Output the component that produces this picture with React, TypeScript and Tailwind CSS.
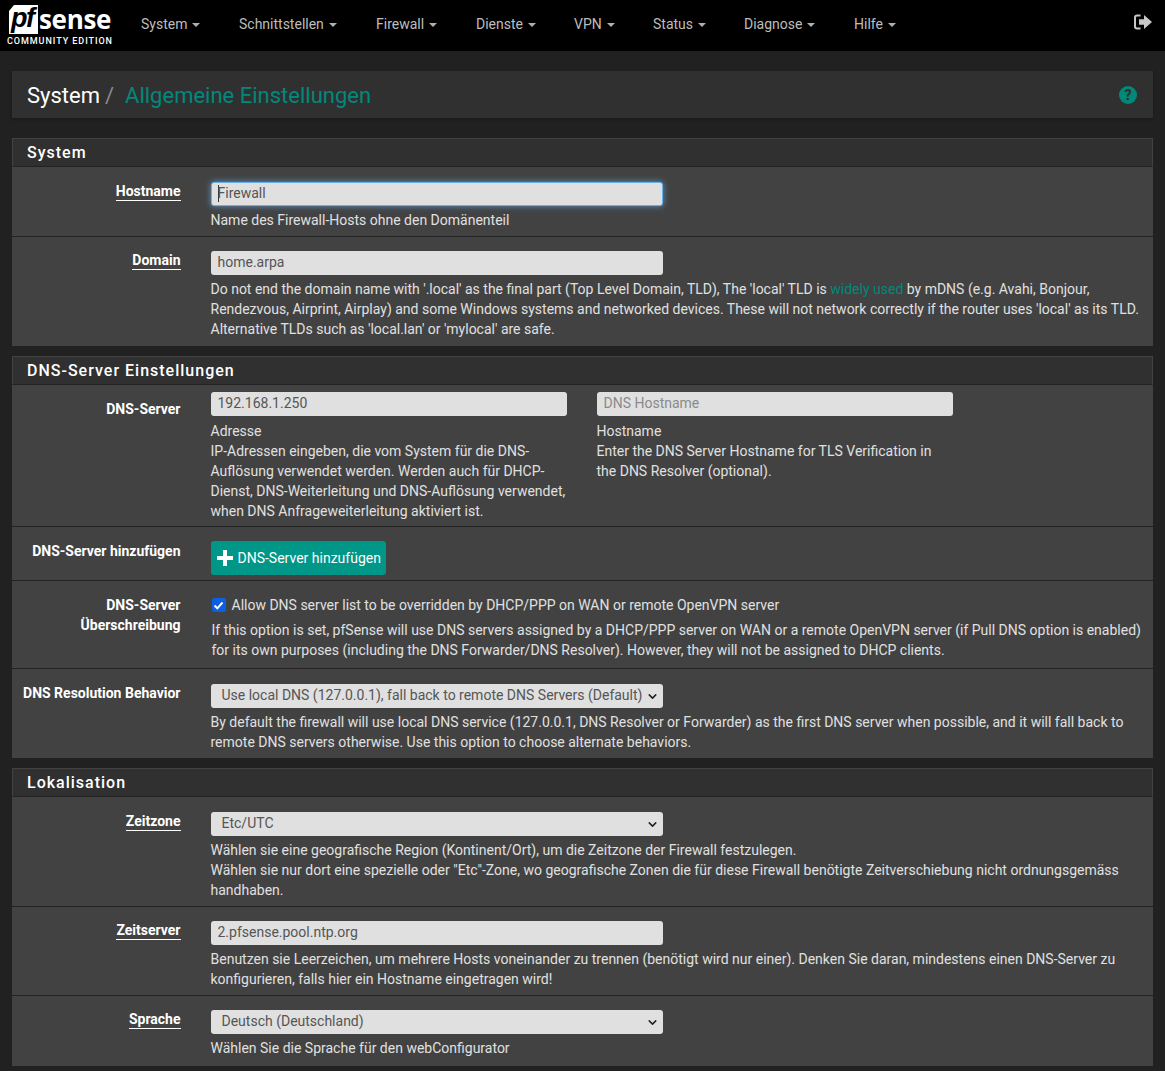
import React from "react";
import { ChevronDown } from "lucide-react";

const font = { fontFamily: "Roboto, sans-serif" };

function Caret() {
  return <span className="inline-block ml-[5px] align-middle w-0 h-0 border-x-4 border-x-transparent border-t-4 border-t-[#b0b0b0]" />;
}

const nav: [string, string][] = [
  ["System", "w-[98px]"],
  ["Schnittstellen", "w-[137px]"],
  ["Firewall", "w-[100px]"],
  ["Dienste", "w-[98px]"],
  ["VPN", "w-[79px]"],
  ["Status", "w-[91px]"],
  ["Diagnose", "w-[110px]"],
  ["Hilfe", "w-[80px]"],
];

function Logo() {
  return (
    <div className="w-[125px] h-[51px] relative shrink-0">
      <svg className="absolute left-[9px] top-[5px]" width="29" height="29" viewBox="0 0 29 29">
        <path d="M5 0H29V29H0V6Z" fill="#fff" />
      </svg>
      <span className="absolute left-[11px] top-[4px] text-[27px] leading-[28px] font-bold italic text-black tracking-[-1.5px]" style={{ fontFamily: '"Liberation Sans", sans-serif' }}>pf</span>
      <span className="absolute left-[39px] top-[6px] text-[26px] leading-[27px] font-bold text-white tracking-[-0.3px]" style={{ fontFamily: '"Open Sans", sans-serif' }}>sense</span>
      <span className="absolute left-[7px] top-[35px] text-[9px] leading-3 font-medium text-white tracking-[0.95px] whitespace-nowrap">COMMUNITY EDITION</span>
    </div>
  );
}

function Input({ value, placeholder, focus, className = "w-[452px]" }: { value?: string; placeholder?: string; focus?: boolean; className?: string }) {
  return (
    <div className={`${className} h-6 rounded-[3px] bg-[#e0e0e0] pb-[2px] flex items-center text-sm ${value ? "text-[#555]" : "text-[#8a8a8a]"} ${focus ? "border border-[#66afe9] shadow-[0_0_6px_rgba(102,175,233,0.8)] px-[6px]" : "px-[7px]"}`}>
      {focus && <span className="w-px h-[17px] bg-[#333] -mr-px" />}
      {value || placeholder}
    </div>
  );
}

function Select({ value }: { value: string }) {
  return (
    <div className="w-[452px] h-6 rounded-[3px] bg-[#e0e0e0] pl-[11px] pr-[4px] pb-[2px] flex items-center justify-between text-sm text-[#555]">
      <span>{value}</span>
      <ChevronDown size={13} strokeWidth={2.8} className="text-[#222] mt-[2px]" />
    </div>
  );
}

function Row({ label, link, h, lt = "pt-[13px]", ct = "pt-[14px]", children }: { label: React.ReactNode; link?: boolean; h: string; lt?: string; ct?: string; children: React.ReactNode }) {
  return (
    <div className={`flex gap-[30px] border-b border-[#222] last:border-b-0 ${h}`}>
      <div className={`w-[168.5px] shrink-0 text-right text-sm font-bold leading-5 text-white ${lt}`}>
        {link ? <span className="border-b border-white inline-block leading-[17px]">{label}</span> : label}
      </div>
      <div className={`flex-1 pr-[8px] min-w-0 ${ct}`}>{children}</div>
    </div>
  );
}

function Help({ children, className = "mt-[4px]" }: { children: React.ReactNode; className?: string }) {
  return <div className={`${className} text-sm leading-5 text-[#e0e0e0]`}>{children}</div>;
}

function Panel({ title, children }: { title: string; children: React.ReactNode }) {
  return (
    <section className="mb-[10px] bg-[#424242]">
      <h2 className="h-[29px] bg-[#303030] border border-[#424242] border-b-[#222] pl-[14px] pt-[4px] text-base leading-5 font-medium text-white tracking-[1px]">{title}</h2>
      {children}
    </section>
  );
}

export default function App() {
  return (
    <div className="min-h-[1071px] bg-[#212121] overflow-hidden" style={font}>
      <header className="h-[51px] bg-black flex items-start">
        <Logo />
        <nav className="flex h-[51px] items-center text-sm text-[#bdbdbd] pb-[4px]">
          {nav.map(([n, w]) => (
            <div key={n} className={`${w} pl-[16px] whitespace-nowrap`}>{n}<Caret /></div>
          ))}
        </nav>
        <svg className="ml-auto mr-[12px] mt-[14px]" width="19" height="16" viewBox="0 0 19 16" fill="#c8c8c8">
          <path d="M6.500 1.500H3.200C1.900 1.500 1 2.400 1 3.700v8.600c0 1.300.9 2.200 2.200 2.200H6.500" fill="none" stroke="#c8c8c8" strokeWidth="2" />
          <path d="M5 5.200H10V1L18 8l-8 7v-4.200H5Z" />
        </svg>
      </header>
      <main className="px-3 pt-5">
        <div className="h-[47px] bg-[#303030] shadow-[0_1px_3px_rgba(0,0,0,0.3)] flex items-center pl-[15px] pr-[16px] mb-5">
          <span className="text-[22px] text-white mt-[1px]">System</span>
          <span className="text-[22px] text-[#8a8a8a] ml-[5px] mt-[1px]">/</span>
          <span className="text-[22px] text-[#00897b] ml-[11px] mt-[1px]">Allgemeine Einstellungen</span>
          <svg className="ml-auto mt-[1px]" width="18" height="18" viewBox="0 0 18 18">
            <circle cx="9" cy="9" r="9" fill="#00897b" />
            <text x="9" y="14" textAnchor="middle" fontSize="14" fontWeight="900" fill="#303030" fontFamily="Roboto, sans-serif">?</text>
          </svg>
        </div>

        <Panel title="System">
          <Row label="Hostname" link h="h-[70px]" lt="pt-[14px]" ct="pt-[15px]">
            <Input value="Firewall" focus />
            <Help>Name des Firewall-Hosts ohne den Domänenteil</Help>
          </Row>
          <Row label="Domain" link h="h-[109px]">
            <Input value="home.arpa" />
            <Help>
              Do not end the domain name with '.local' as the final part (Top Level Domain, TLD), The 'local' TLD is <span className="text-[#00897b]">widely used</span> by mDNS (e.g. Avahi, Bonjour, Rendezvous, Airprint, Airplay) and some Windows systems and networked devices. These will not network correctly if the router uses 'local' as its TLD. Alternative TLDs such as 'local.lan' or 'mylocal' are safe.
            </Help>
          </Row>
        </Panel>

        <Panel title="DNS-Server Einstellungen">
          <Row label="DNS-Server" h="h-[142px]" lt="pt-[14px]" ct="pt-[7px]">
            <div className="flex gap-[30px]">
              <div className="w-[356px]">
                <Input value="192.168.1.250" className="w-[356px]" />
                <Help className="mt-[5px]">Adresse<br />IP-Adressen eingeben, die vom System für die DNS-Auflösung verwendet werden. Werden auch für DHCP-Dienst, DNS-Weiterleitung und DNS-Auflösung verwendet, when DNS Anfrageweiterleitung aktiviert ist.</Help>
              </div>
              <div className="w-[356px]">
                <Input placeholder="DNS Hostname" className="w-[356px]" />
                <Help className="mt-[5px]">Hostname<br />Enter the DNS Server Hostname for TLS Verification in the DNS Resolver (optional).</Help>
              </div>
            </div>
          </Row>
          <Row label="DNS-Server hinzufügen" h="h-[54px]" lt="pt-[14px]">
            <div className="w-[175px] h-[34px] rounded-[3px] bg-[#009688] text-white text-sm flex items-center pl-[5px] gap-[4px]">
              <svg width="18" height="18" viewBox="0 0 18 18" fill="#fff"><path d="M7 1h4v6h6v4h-6v6H7v-6H1V7h6Z" /></svg>
              DNS-Server hinzufügen
            </div>
          </Row>
          <Row label={<>DNS-Server<br />Überschreibung</>} h="h-[88px]" lt="pt-[14px]">
            <div className="flex items-center text-sm leading-5 text-[#e0e0e0] pl-px">
              <span className="w-[14px] h-[14px] rounded-[2px] bg-[#0b5fe0] flex items-center justify-center mr-[6px]">
                <svg width="11" height="11" viewBox="0 0 11 11" fill="none" stroke="#fff" strokeWidth="2"><path d="M1.500 5.500 4.300 8.300 9.500 2.500" /></svg>
              </span>
              Allow DNS server list to be overridden by DHCP/PPP on WAN or remote OpenVPN server
            </div>
            <div className="mt-[5px] text-sm leading-5 text-[#e0e0e0] pl-px">If this option is set, pfSense will use DNS servers assigned by a DHCP/PPP server on WAN or a remote OpenVPN server (if Pull DNS option is enabled) for its own purposes (including the DNS Forwarder/DNS Resolver). However, they will not be assigned to DHCP clients.</div>
          </Row>
          <Row label="DNS Resolution Behavior" h="h-[89px]" lt="pt-[14px]" ct="pt-[15px]">
            <Select value="Use local DNS (127.0.0.1), fall back to remote DNS Servers (Default)" />
            <Help>By default the firewall will use local DNS service (127.0.0.1, DNS Resolver or Forwarder) as the first DNS server when possible, and it will fall back to remote DNS servers otherwise. Use this option to choose alternate behaviors.</Help>
          </Row>
        </Panel>

        <Panel title="Lokalisation">
          <Row label="Zeitzone" link h="h-[110px]" lt="pt-[14px]" ct="pt-[15px]">
            <Select value="Etc/UTC" />
            <Help>Wählen sie eine geografische Region (Kontinent/Ort), um die Zeitzone der Firewall festzulegen.<br />Wählen sie nur dort eine spezielle oder "Etc"-Zone, wo geografische Zonen die für diese Firewall benötigte Zeitverschiebung nicht ordnungsgemäss handhaben.</Help>
          </Row>
          <Row label="Zeitserver" link h="h-[89px]">
            <Input value="2.pfsense.pool.ntp.org" />
            <Help>Benutzen sie Leerzeichen, um mehrere Hosts voneinander zu trennen (benötigt wird nur einer). Denken Sie daran, mindestens einen DNS-Server zu konfigurieren, falls hier ein Hostname eingetragen wird!</Help>
          </Row>
          <Row label="Sprache" link h="h-[70px]">
            <Select value="Deutsch (Deutschland)" />
            <Help>Wählen Sie die Sprache für den webConfigurator</Help>
          </Row>
        </Panel>
      </main>
    </div>
  );
}
